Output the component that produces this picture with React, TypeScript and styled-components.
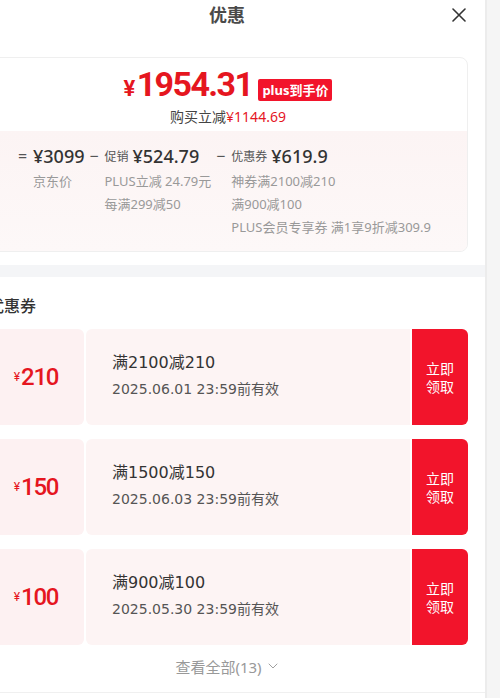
import styled, { createGlobalStyle } from 'styled-components'
import { ChevronDown } from 'lucide-react'

const GlobalStyle = createGlobalStyle`
    body {
        margin: 0;
        overflow: hidden;
        background: #f5f5f5;
        font-family: "Noto Sans", "Noto Sans CJK SC", sans-serif;
        color: #333;
    }
`

const RED = '#f2142b'
const PRICE_RED = '#e5161f'
const WIDE = '"DejaVu Sans", "Noto Sans CJK SC", sans-serif'

const Page = styled.div`
    display: flex;
    height: 698px;
    overflow: hidden;
`

const Panel = styled.div`
    flex: 0 0 514px;
    margin-left: -29px;
    background: #fff;
    display: flex;
    flex-direction: column;
`

const ScrollStrip = styled.div`
    flex: 1;
    border-left: 2px solid #ececec;
    background: #f5f5f5;
`

const Header = styled.header`
    height: 28px;
    padding: 0 19px 0 17px;
    display: grid;
    grid-template-columns: 1fr auto 1fr;
    align-items: center;
`

const Title = styled.h1`
    grid-column: 2;
    margin: 0;
    font-family: "Noto Sans CJK SC", sans-serif;
    font-size: 18px;
    font-weight: 700;
    color: #4a4a4a;
    line-height: 28px;
`

const CloseBtn = styled.button`
    grid-column: 3;
    justify-self: end;
    width: 14px;
    height: 14px;
    padding: 0;
    border: 0;
    background: none;
    display: flex;
    margin-top: 1px;
`

const PriceCard = styled.section`
    margin: 29px 17px 0;
    border: 1px solid #efefef;
    border-radius: 8px;
    overflow: hidden;
`

const PriceTop = styled.div`
    padding: 11px 0 4px;
    display: flex;
    flex-direction: column;
    align-items: center;
`

const PriceLine = styled.div`
    display: flex;
    align-items: flex-end;
    height: 40px;
`

const BigPrice = styled.span`
    font-family: Roboto, sans-serif;
    font-weight: 700;
    font-size: 34px;
    line-height: 40px;
    letter-spacing: -1.6px;
    color: ${PRICE_RED};
`

const Yen = styled.span<{ size?: string }>`
    font-size: ${p => p.size || '22px'};
    margin-right: ${p => (p.size ? '1px' : '3px')};
`

const Badge = styled.span`
    margin: 0 0 8px 6px;
    height: 22px;
    padding: 0 4px;
    border-radius: 2px;
    background: ${RED};
    color: #fff;
    font-size: 13px;
    font-weight: 700;
    line-height: 22px;
`

const SaveLine = styled.div`
    font-size: 14px;
    line-height: 20px;
    color: #444;
    margin-top: -2px;
`

const RedText = styled.span`
    color: ${PRICE_RED};
`

const Breakdown = styled.div`
    background: linear-gradient(180deg, #fcf4f4 0%, #fdf8f8 100%);
    padding: 13px 0 12px 29px;
    display: flex;
    gap: 5px;
`

const Column = styled.div`
    display: flex;
`

const Op = styled.span`
    width: 15px;
    font-size: 16px;
    line-height: 24px;
    color: #555;
`

const ColBody = styled.div`
    display: flex;
    flex-direction: column;
`

const Amount = styled.div`
    height: 24px;
    display: flex;
    align-items: center;
    gap: 4px;
`

const AmountLabel = styled.span`
    font-size: 12px;
    color: #555;
`

const AmountValue = styled.span`
    font-size: 18px;
    font-weight: 500;
    color: #333;
`

const SubText = styled.span<{ first?: boolean }>`
    font-size: 13px;
    line-height: 23px;
    color: #999;
    margin-top: ${p => (p.first ? '2px' : '0')};
    white-space: nowrap;
`

const Gap = styled.div`
    height: 12px;
    background: #f4f5f7;
    margin-top: 13px;
`

const CouponSection = styled.section`
    padding: 16px 17px 0;
    display: flex;
    flex-direction: column;
`

const SectionTitle = styled.h2`
    margin: 0 0 12px;
    font-family: "Noto Sans CJK SC", sans-serif;
    font-size: 16px;
    font-weight: 500;
    line-height: 24px;
    color: #333;
`

const CouponList = styled.div`
    display: flex;
    flex-direction: column;
    gap: 14px;
`

const Coupon = styled.div`
    height: 96px;
    display: flex;
    gap: 2px;
`

const CouponValue = styled.div`
    flex: 0 0 96px;
    background: #fdf1f2;
    border-radius: 6px;
    display: flex;
    align-items: center;
    justify-content: center;
    color: ${PRICE_RED};
    font-family: Roboto, sans-serif;
`

const CouponNumber = styled.span`
    font-size: 24px;
    font-weight: 500;
    letter-spacing: -1.2px;
`

const CouponInfo = styled.div`
    flex: 1;
    background: #fdf4f4;
    border-radius: 6px 0 0 6px;
    padding: 0 0 2px 26px;
    display: flex;
    flex-direction: column;
    justify-content: center;
    gap: 4px;
    font-family: ${WIDE};
`

const CouponTitle = styled.div`
    font-size: 16px;
    line-height: 22px;
    color: #333;
`

const CouponDate = styled.div`
    font-size: 14px;
    line-height: 22px;
    color: #555;
`

const TakeBtn = styled.button`
    flex: 0 0 56px;
    border: 0;
    border-radius: 0 6px 6px 0;
    background: ${RED};
    color: #fff;
    font-family: "Noto Sans CJK SC", sans-serif;
    font-size: 14px;
    line-height: 18px;
    padding: 0;
`

const ViewAll = styled.div`
    height: 42px;
    display: flex;
    align-items: center;
    justify-content: center;
    gap: 3px;
    font-size: 15px;
    color: #999;
    margin-bottom: 5px;
`

const Footer = styled.div`
    border-top: 1px solid #f0f0f0;
    flex: 1;
`

const coupons = [
    { value: '210', title: '满2100减210', date: '2025.06.01 23:59前有效' },
    { value: '150', title: '满1500减150', date: '2025.06.03 23:59前有效' },
    { value: '100', title: '满900减100', date: '2025.05.30 23:59前有效' },
]

export default function App() {
    return (
        <>
            <GlobalStyle />
            <Page>
                <Panel>
                    <Header>
                        <Title>优惠</Title>
                        <CloseBtn aria-label="关闭">
                            <svg width="14" height="14" viewBox="0 0 14 14">
                                <path d="M1 1 L13 13 M13 1 L1 13" stroke="#333" strokeWidth="1.6" strokeLinecap="round" />
                            </svg>
                        </CloseBtn>
                    </Header>

                    <PriceCard>
                        <PriceTop>
                            <PriceLine>
                                <BigPrice><Yen>¥</Yen>1954.31</BigPrice>
                                <Badge>plus到手价</Badge>
                            </PriceLine>
                            <SaveLine>购买立减<RedText>¥1144.69</RedText></SaveLine>
                        </PriceTop>
                        <Breakdown>
                            <Column>
                                <Op>=</Op>
                                <ColBody>
                                    <Amount><AmountValue>¥3099</AmountValue></Amount>
                                    <SubText first>京东价</SubText>
                                </ColBody>
                            </Column>
                            <Column>
                                <Op>−</Op>
                                <ColBody>
                                    <Amount><AmountLabel>促销</AmountLabel><AmountValue>¥524.79</AmountValue></Amount>
                                    <SubText first>PLUS立减 24.79元</SubText>
                                    <SubText>每满299减50</SubText>
                                </ColBody>
                            </Column>
                            <Column>
                                <Op>−</Op>
                                <ColBody>
                                    <Amount><AmountLabel>优惠券</AmountLabel><AmountValue>¥619.9</AmountValue></Amount>
                                    <SubText first>神券满2100减210</SubText>
                                    <SubText>满900减100</SubText>
                                    <SubText>PLUS会员专享券 满1享9折减309.9</SubText>
                                </ColBody>
                            </Column>
                        </Breakdown>
                    </PriceCard>

                    <Gap />

                    <CouponSection>
                        <SectionTitle>优惠券</SectionTitle>
                        <CouponList>
                            {coupons.map(c => (
                                <Coupon key={c.value}>
                                    <CouponValue>
                                        <Yen size="12px">¥</Yen>
                                        <CouponNumber>{c.value}</CouponNumber>
                                    </CouponValue>
                                    <CouponInfo>
                                        <CouponTitle>{c.title}</CouponTitle>
                                        <CouponDate>{c.date}</CouponDate>
                                    </CouponInfo>
                                    <TakeBtn>立即<br />领取</TakeBtn>
                                </Coupon>
                            ))}
                        </CouponList>
                        <ViewAll>查看全部(13)<ChevronDown size={16} strokeWidth={1.4} /></ViewAll>
                    </CouponSection>
                    <Footer />
                </Panel>
                <ScrollStrip />
            </Page>
        </>
    )
}
